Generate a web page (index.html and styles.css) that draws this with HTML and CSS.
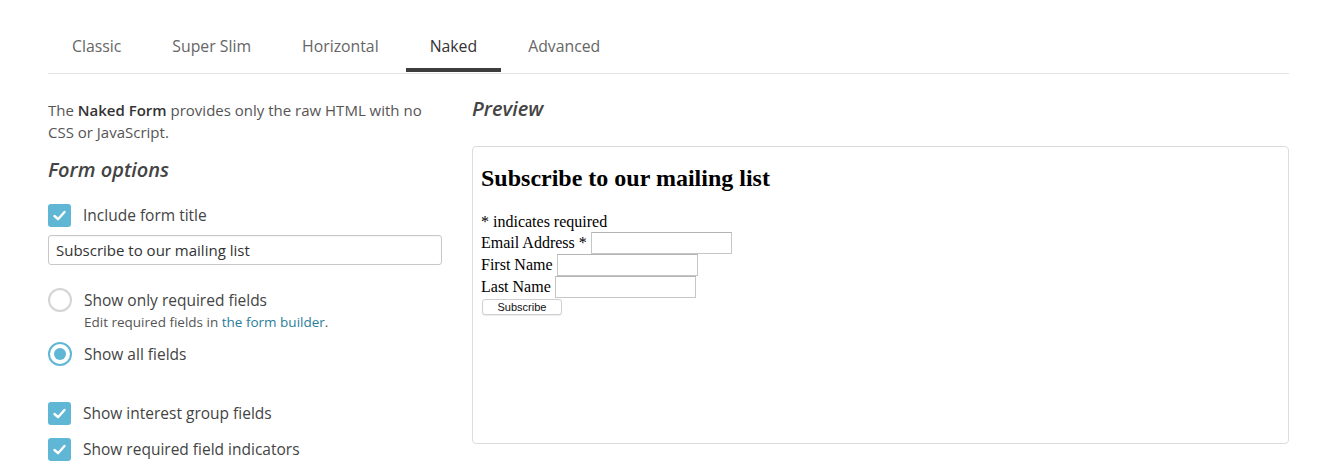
FILE: index.html
```html
<!DOCTYPE html>
<html>
<head>
<meta charset="utf-8">
<link rel="stylesheet" href="styles.css">
</head>
<body>
<div class="page">
  <nav class="tabs">
    <span class="tab">Classic</span>
    <span class="tab">Super Slim</span>
    <span class="tab">Horizontal</span>
    <span class="tab active">Naked</span>
    <span class="tab">Advanced</span>
  </nav>
  <div class="main">
    <div class="left">
      <p class="desc">The <strong>Naked Form</strong> provides only the raw HTML with no CSS or JavaScript.</p>
      <h3 class="section-title">Form options</h3>
      <div class="option opt-title">
        <span class="check"><svg viewBox="0 0 23 23" width="23" height="23"><path d="M6.5 12 L10 15.2 L16.5 8" fill="none" stroke="#fff" stroke-width="2.4" stroke-linecap="round" stroke-linejoin="round"/></svg></span>
        <span class="label">Include form title</span>
      </div>
      <div class="title-input">Subscribe to our mailing list</div>
      <div class="option opt-req">
        <span class="radio"></span>
        <span class="label">Show only required fields</span>
      </div>
      <div class="hint">Edit required fields in <a class="link">the form builder</a>.</div>
      <div class="option opt-all">
        <span class="radio on"><span class="dot"></span></span>
        <span class="label">Show all fields</span>
      </div>
      <div class="option opt-groups">
        <span class="check"><svg viewBox="0 0 23 23" width="23" height="23"><path d="M6.5 12 L10 15.2 L16.5 8" fill="none" stroke="#fff" stroke-width="2.4" stroke-linecap="round" stroke-linejoin="round"/></svg></span>
        <span class="label">Show interest group fields</span>
      </div>
      <div class="option opt-ind">
        <span class="check"><svg viewBox="0 0 23 23" width="23" height="23"><path d="M6.5 12 L10 15.2 L16.5 8" fill="none" stroke="#fff" stroke-width="2.4" stroke-linecap="round" stroke-linejoin="round"/></svg></span>
        <span class="label">Show required field indicators</span>
      </div>
    </div>
    <div class="right">
      <h3 class="section-title preview-title">Preview</h3>
      <div class="preview">
        <h2 class="pv-title">Subscribe to our mailing list</h2>
        <div class="pv-note">* indicates required</div>
        <div class="pv-row"><span>Email Address *</span><span class="pv-input"></span></div>
        <div class="pv-row"><span>First Name</span><span class="pv-input"></span></div>
        <div class="pv-row"><span>Last Name</span><span class="pv-input"></span></div>
        <div class="pv-btn-row"><span class="pv-btn">Subscribe</span></div>
      </div>
    </div>
  </div>
</div>
</body>
</html>
```

FILE: styles.css
```css
html, body {
  margin: 0;
  padding: 0;
  background: #fff;
}
body {
  font-family: "Open Sans", "Liberation Sans", sans-serif;
  color: #444;
}
.page {
  width: 1241px;
  margin-left: 48px;
}
.tabs {
  display: flex;
  gap: 3px;
  padding-top: 22px;
  padding-bottom: 1px;
  border-bottom: 1px solid #e3e3e3;
}
.tab {
  padding: 13px 24px 11px;
  line-height: 22px;
  font-size: 15.8px;
  color: #666;
  border-bottom: 4px solid transparent;
}
.tab.active {
  color: #333;
  border-bottom-color: #3d3d3d;
}
.main {
  display: flex;
  gap: 30px;
}
.left {
  width: 394px;
  flex: none;
}
.right {
  flex: 1;
}
.desc {
  margin: 25px 0 0;
  font-size: 15px;
  line-height: 22px;
  color: #555;
}
.desc strong {
  font-weight: 600;
  color: #333;
}
.section-title {
  margin: 13px 0 0;
  font-size: 20px;
  line-height: 28px;
  font-weight: 600;
  font-style: italic;
  color: #444;
}
.option {
  display: flex;
  align-items: center;
  height: 24px;
  gap: 12px;
}
.option .label {
  font-size: 15.5px;
  color: #444;
}
.check {
  width: 23px;
  height: 23px;
  border-radius: 3px;
  background: #5fb6d5;
  display: flex;
}
.radio {
  width: 24px;
  height: 24px;
  box-sizing: border-box;
  border: 2px solid #d4d4d4;
  border-radius: 50%;
  display: flex;
  align-items: center;
  justify-content: center;
}
.radio.on {
  border-color: #5fb6d5;
}
.radio .dot {
  width: 12px;
  height: 12px;
  border-radius: 50%;
  background: #5fb6d5;
}
.opt-title { margin-top: 19px; }
.title-input {
  margin-top: 8px;
  height: 30px;
  box-sizing: border-box;
  border: 1px solid #c8c8c8;
  border-radius: 3px;
  padding: 0 7px;
  font-size: 15px;
  line-height: 28px;
  color: #333;
  box-shadow: inset 0 1px 1px rgba(0,0,0,0.04);
}
.opt-req { margin-top: 23px; }
.hint {
  margin-left: 36px;
  font-size: 13.5px;
  line-height: 20px;
  color: #555;
}
.link {
  color: #2a7d99;
}
.opt-all { margin-top: 10px; }
.opt-groups { margin-top: 35px; }
.opt-ind { margin-top: 12px; }

.preview-title {
  margin-top: 21px;
}
.preview {
  margin-top: 23px;
  height: 298px;
  box-sizing: border-box;
  border: 1px solid #dcdcdc;
  border-radius: 4px;
  padding: 0 8px;
  font-family: "Liberation Serif", "Times New Roman", serif;
  font-size: 16px;
  color: #000;
  overflow: hidden;
}
.pv-title {
  margin: 18px 0 20px;
  font-size: 24px;
  line-height: 27px;
  font-weight: bold;
}
.pv-note {
  line-height: 20px;
}
.pv-row {
  display: flex;
  align-items: center;
  gap: 4px;
  height: 22px;
}
.pv-input {
  width: 141px;
  height: 22px;
  box-sizing: border-box;
  border: 1px solid #c6c6c6;
  border-top-color: #b4b4b4;
  background: #fff;
}
.pv-btn-row {
  height: 18px;
  padding-top: 1px;
  padding-left: 1px;
  box-sizing: border-box;
}
.pv-btn {
  display: inline-block;
  width: 80px;
  height: 16px;
  box-sizing: border-box;
  border: 1px solid #d0d0d0;
  border-radius: 3px;
  background: #fff;
  font-family: "Liberation Sans", Arial, sans-serif;
  font-size: 11px;
  line-height: 14px;
  text-align: center;
  color: #111;
  box-shadow: 0 1px 1px rgba(0,0,0,0.08);
  vertical-align: top;
}
```
